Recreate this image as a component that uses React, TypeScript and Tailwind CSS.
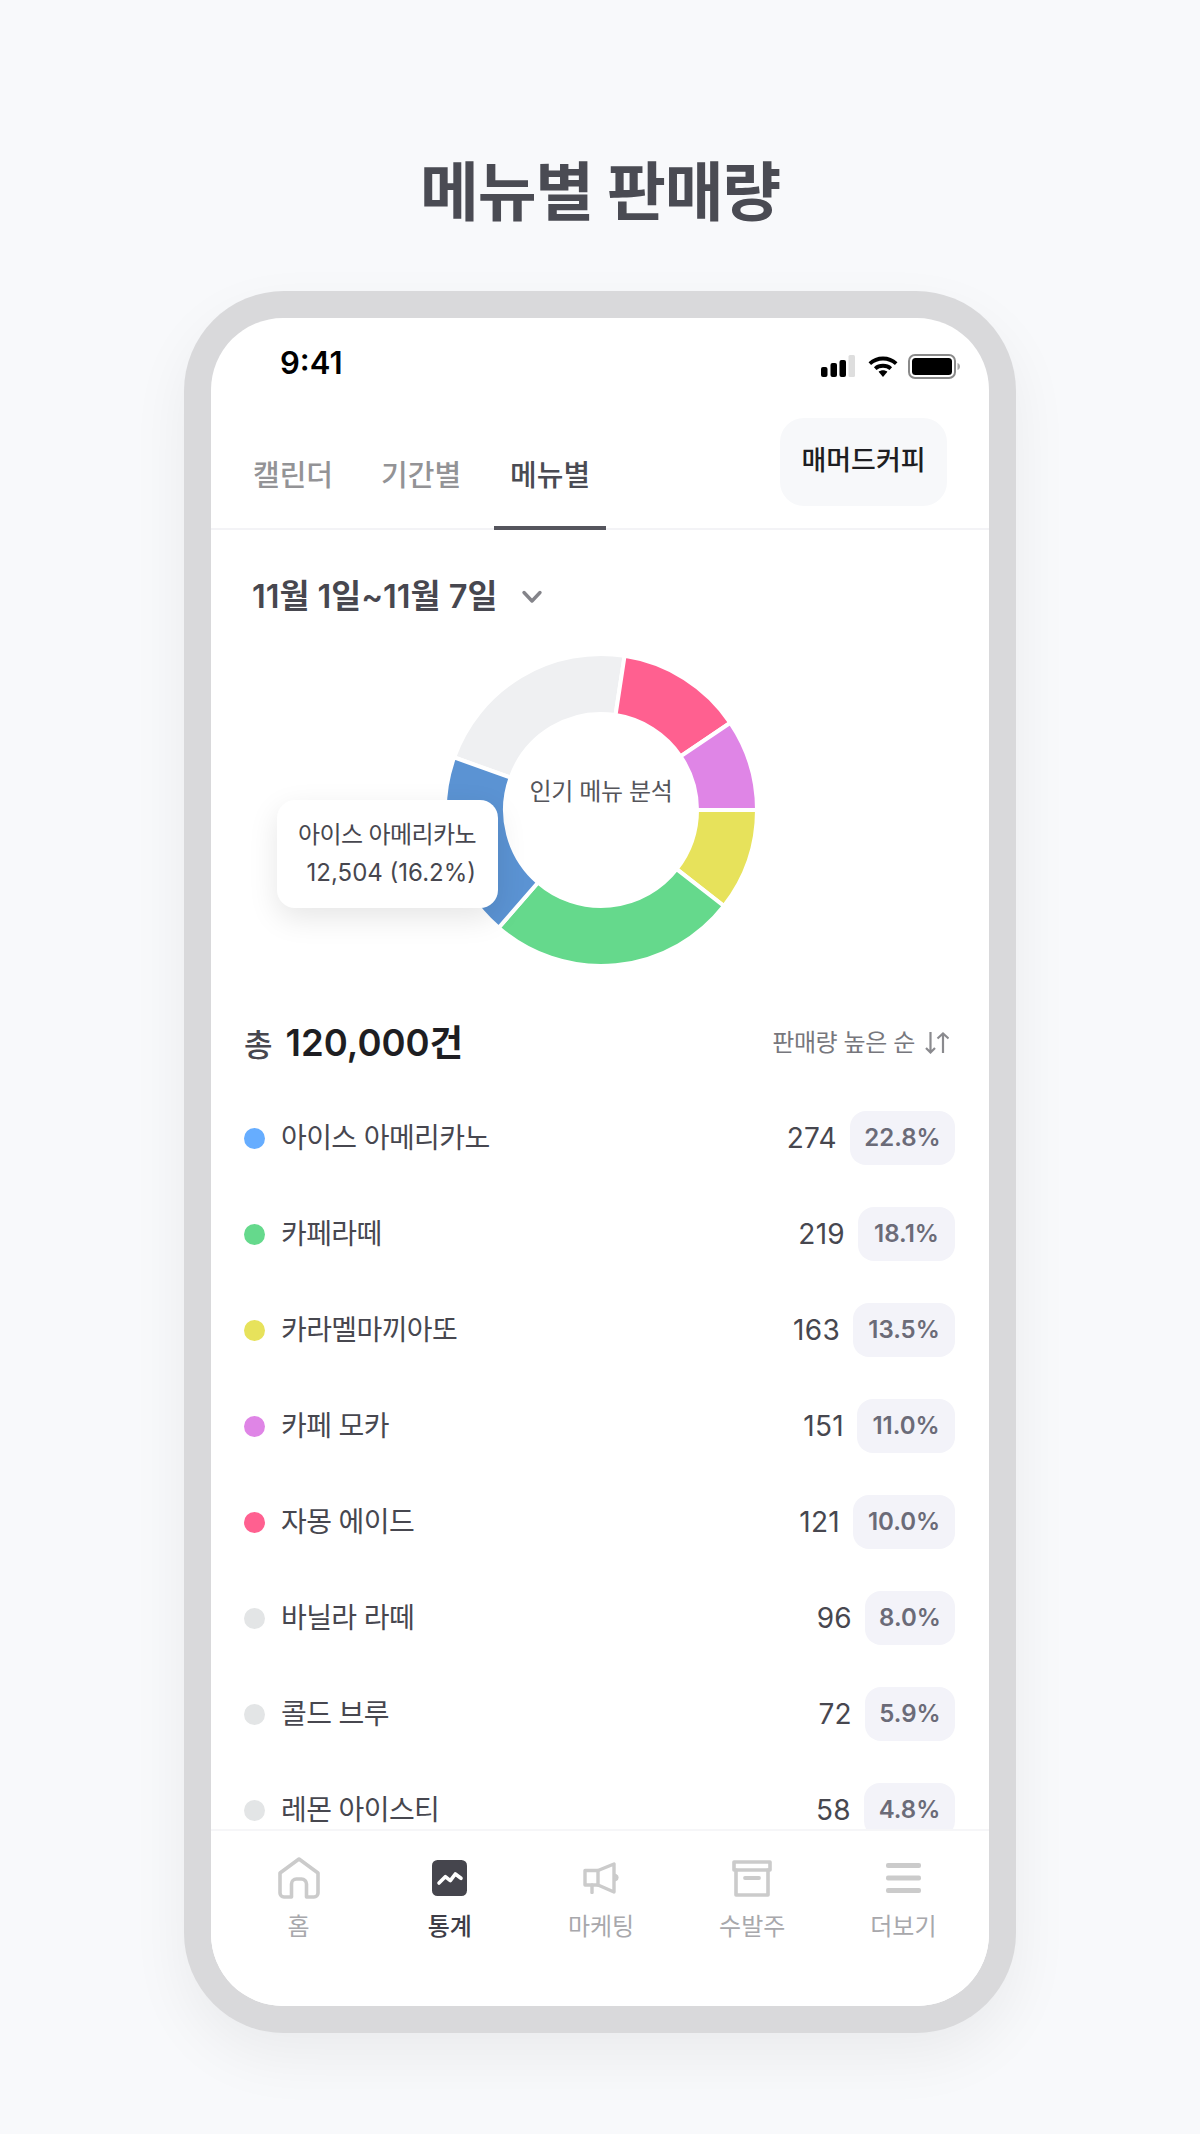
import React from "react";

const rows = [
  { c: "#66ADFF", n: "아이스 아메리카노", v: "274", p: "22.8%", w: "w-[105px]" },
  { c: "#65D98C", n: "카페라떼", v: "219", p: "18.1%", w: "w-[97px]" },
  { c: "#E7E25B", n: "카라멜마끼아또", v: "163", p: "13.5%", w: "w-[102px]" },
  { c: "#DF85E6", n: "카페 모카", v: "151", p: "11.0%", w: "w-[98px]" },
  { c: "#FF6090", n: "자몽 에이드", v: "121", p: "10.0%", w: "w-[102px]" },
  { c: "#E3E5E6", n: "바닐라 라떼", v: "96", p: "8.0%", w: "w-[90px]" },
  { c: "#E3E5E6", n: "콜드 브루", v: "72", p: "5.9%", w: "w-[90px]" },
  { c: "#E3E5E6", n: "레몬 아이스티", v: "58", p: "4.8%", w: "w-[91px]" },
];

const segs = [
  { a: 289.7, b: 368.7, c: "#EFF0F2" },
  { a: 368.7, b: 416, c: "#FF6090" },
  { a: 416, b: 450, c: "#DF85E6" },
  { a: 450, b: 488, c: "#E7E25B" },
  { a: 488, b: 581, c: "#65D98C" },
  { a: 581, b: 649.7, c: "#5B93D3" },
];

function pt(r: number, deg: number) {
  const t = (deg * Math.PI) / 180;
  return `${(157 + r * Math.sin(t)).toFixed(2)} ${(157 - r * Math.cos(t)).toFixed(2)}`;
}
function arc(a: number, b: number) {
  const R = 156;
  const r = 96;
  const large = b - a > 180 ? 1 : 0;
  return `M${pt(R, a)}A${R} ${R} 0 ${large} 1 ${pt(R, b)}L${pt(r, b)}A${r} ${r} 0 ${large} 0 ${pt(r, a)}Z`;
}

function Donut() {
  return (
    <svg width="314" height="314" viewBox="0 0 314 314">
      {segs.map((s) => (
        <path key={s.a} d={arc(s.a, s.b)} fill={s.c} stroke="#fff" strokeWidth="4" />
      ))}
    </svg>
  );
}

function Signal() {
  return (
    <svg width="34" height="22" viewBox="0 0 34 22">
      <rect x="0" y="12" width="6.5" height="10" rx="2" fill="#000" />
      <rect x="9.5" y="8" width="6.5" height="14" rx="2" fill="#000" />
      <rect x="18.5" y="5" width="6.5" height="17" rx="2" fill="#000" />
      <rect x="27.5" y="0" width="6.5" height="22" rx="1.5" fill="#dedede" />
    </svg>
  );
}
function Wifi() {
  return (
    <svg width="30" height="21" viewBox="0 0 30 21">
      <path d="M1.8 7.6C9.3 .8 20.7 .8 28.2 7.6" fill="none" stroke="#000" strokeWidth="3.8" />
      <path d="M7.2 12.6C11.5 8.8 18.5 8.8 22.8 12.6" fill="none" stroke="#000" strokeWidth="3.8" />
      <path d="M10.6 15.8L15 21L19.4 15.8C16.8 13.8 13.2 13.8 10.6 15.8Z" fill="#000" />
    </svg>
  );
}
function Battery() {
  return (
    <svg width="52" height="25" viewBox="0 0 52 25">
      <rect x="1" y="1" width="46" height="23" rx="6" fill="none" stroke="#8a8a8a" strokeWidth="2" />
      <rect x="4" y="4" width="40" height="17" rx="3.5" fill="#000" />
      <path d="M49.5 9C51 9.5 52 10.8 52 12.5C52 14.2 51 15.5 49.5 16Z" fill="#aaa" />
    </svg>
  );
}

const G = "#CBCBCB";
function HomeI() {
  return (
    <svg width="42" height="42" viewBox="0 0 42 42" fill="none" stroke={G} strokeWidth="3.6" strokeLinejoin="round">
      <path d="M2 16L21 2L40 16V36a4 4 0 0 1-4 4H28.5V27a5 5 0 0 0-5-5h-5a5 5 0 0 0-5 5V40H6a4 4 0 0 1-4-4Z" />
    </svg>
  );
}
function StatsI() {
  return (
    <svg width="35" height="36" viewBox="0 0 35 36">
      <rect width="35" height="36" rx="5.5" fill="#45454D" />
      <path d="M7 23L13.3 16.7L18.3 20.7L23.3 14L29 18.3" fill="none" stroke="#fff" strokeWidth="3.6" strokeLinejoin="round" strokeLinecap="round" />
    </svg>
  );
}
function MegaI() {
  return (
    <svg width="36" height="32" viewBox="0 0 36 32" fill="none" stroke={G} strokeWidth="3.4" strokeLinejoin="round" strokeLinecap="round">
      <path d="M2 8.5H15V23H2Z" />
      <path d="M15 8.5L31 2V30L15 23" />
      <path d="M9 23V30.5" />
      <path d="M32.5 13.5C34.5 14.5 34.5 16.5 32.5 17.5" />
    </svg>
  );
}
function BoxI() {
  return (
    <svg width="40" height="37" viewBox="0 0 40 37" fill="none" stroke={G} strokeWidth="3.6" strokeLinejoin="round" strokeLinecap="round">
      <path d="M2 2H38V10H2Z" />
      <path d="M4 10V35H36V10" />
      <path d="M13 18H27" strokeWidth="3.8" />
    </svg>
  );
}
function MenuI() {
  return (
    <svg width="35" height="30" viewBox="0 0 35 30" fill={G}>
      <rect y="0" width="35" height="5" rx="2" />
      <rect y="12.5" width="35" height="5" rx="2" />
      <rect y="25" width="35" height="5" rx="2" />
    </svg>
  );
}

const tabs = [
  { t: "통계", on: true, i: <StatsI /> },
  { t: "마케팅", on: false, i: <MegaI /> },
  { t: "수발주", on: false, i: <BoxI /> },
  { t: "더보기", on: false, i: <MenuI /> },
];

export default function App() {
  return (
    <div className="w-[1200px] h-[2134px] bg-[#F8F9FB] overflow-hidden flex flex-col items-center font-['Inter','Noto_Sans_CJK_KR',sans-serif]">
      <h1 className="mt-[150px] h-[84px] leading-[84px] text-[64px] font-bold text-[#4A4B53] tracking-[-1.2px]">메뉴별 판매량</h1>
      <div className="mt-[57px] w-[832px] h-[1742px] rounded-[100px] bg-[#D9D9DB] p-[27px] shadow-[0_24px_60px_rgba(0,0,0,0.06)]">
        <div className="w-full h-full rounded-[72px] bg-white overflow-hidden flex flex-col">
          <div className="h-[88px] shrink-0 flex items-center justify-between pl-[69px] pr-[29px] pt-[2px]">
            <span className="text-[31px] font-semibold text-black">9:41</span>
            <div className="flex items-center mt-[6px]">
              <Signal />
              <span className="w-[13px]" />
              <Wifi />
              <span className="w-[10px]" />
              <Battery />
            </div>
          </div>
          <div className="h-[124px] shrink-0 border-b-2 border-[#F3F3F6] flex justify-between pl-[24px] pr-[42px]">
            <div className="flex items-end gap-[12px]">
              <div className="h-[112px] px-[18px] flex items-center pt-[7px] text-[29px] font-medium text-[#939396]">캘린더</div>
              <div className="h-[112px] px-[18px] flex items-center pt-[7px] text-[29px] font-medium text-[#939396]">기간별</div>
              <div className="ml-[3px] h-[112px] px-[16px] flex items-center pt-[7px] text-[29px] font-medium text-[#4A4B53] border-b-4 border-[#55555D] -mb-[2px]">메뉴별</div>
            </div>
            <div className="mt-[12px] w-[167px] h-[88px] rounded-[24px] bg-[#F7F8FA] flex items-center justify-center text-[27px] font-medium text-[#1E1E22] pb-[2px]">매머드커피</div>
          </div>
          <div className="flex-1 min-h-0 overflow-hidden">
            <div className="pl-[41px] mt-[47px] h-[40px] flex items-center gap-[24px] text-[32.5px] font-semibold text-[#47474F]">
              <span>11월 1일~11월 7일</span>
              <svg width="22" height="14" viewBox="0 0 22 14" fill="none" stroke="#84848A" strokeWidth="3.4" strokeLinecap="round" strokeLinejoin="round"><path d="M3 2.5L11 11L19 2.5" /></svg>
            </div>
            <div className="relative mt-[36px] ml-[233px] w-[314px] h-[314px]">
              <Donut />
              <div className="absolute left-0 right-0 top-[122px] text-center text-[24px] leading-[34px] tracking-[-0.4px] text-[#55555B]">인기 메뉴 분석</div>
              <div className="absolute left-[-167px] top-[147px] w-[221px] h-[108px] rounded-[18px] bg-white shadow-[0_10px_30px_rgba(0,0,0,0.1)] pr-[22px] pt-[16px] text-right text-[24px] leading-[38px] text-[#47474F]">
                <div className="tracking-[-0.6px]">아이스 아메리카노</div>
                <div>12,504 (16.2%)</div>
              </div>
            </div>
            <div className="mt-[48px] h-[56px] pl-[33px] pr-[40px] flex items-center justify-between">
              <div className="flex items-baseline gap-[13px]">
                <span className="text-[31px] font-medium text-[#47474F]">총</span>
                <span className="text-[36.5px] font-semibold text-[#1E1E22]">120,000건</span>
              </div>
              <div className="flex items-center gap-[10px] text-[24px] tracking-[-0.4px] text-[#77777D]">
                <span>판매량 높은 순</span>
                <svg width="24" height="22" viewBox="0 0 24 22" fill="none" stroke="#8A8A8E" strokeWidth="2.2"><path d="M5.5 0V20.5M1 16L5.5 20.5L10 16M18 21V1.5M12.5 6.5L18 1.5L23.5 6.5" /></svg>
              </div>
            </div>
            <div className="mt-[19px]">
              {rows.map((r) => (
                <div key={r.n} className="h-[96px] pl-[33px] pr-[34px] flex items-center">
                  <span className="w-[21px] h-[21px] rounded-full shrink-0" style={{ background: r.c }} />
                  <span className="ml-[16px] text-[28px] tracking-[-0.6px] text-[#47474F] flex-1">{r.n}</span>
                  <span className="text-[28px] tracking-[0.3px] text-[#47474F]">{r.v}</span>
                  <span className={`ml-[13px] h-[54px] rounded-[16px] bg-[#F3F3F9] flex items-center justify-center text-[24px] font-semibold text-[#6B6B78] ${r.w}`}>{r.p}</span>
                </div>
              ))}
            </div>
          </div>
          <div className="h-[177px] shrink-0 border-t-2 border-[#F6F6F8] flex pl-[12px] pr-[10px] bg-white">
            <div className="flex-1 flex flex-col items-center">
              <div className="h-[60px] mt-[17px] flex items-center"><HomeI /></div>
              <span className="mt-[1px] text-[24px] text-[#A8A8AC]">홈</span>
            </div>
            {tabs.map((t) => (
              <div key={t.t} className="flex-1 flex flex-col items-center">
                <div className="h-[60px] mt-[17px] flex items-center">{t.i}</div>
                <span className={t.on ? "mt-[1px] text-[24px] font-medium text-[#3D3D47]" : "mt-[1px] text-[24px] text-[#A8A8AC]"}>{t.t}</span>
              </div>
            ))}
          </div>
        </div>
      </div>
    </div>
  );
}
